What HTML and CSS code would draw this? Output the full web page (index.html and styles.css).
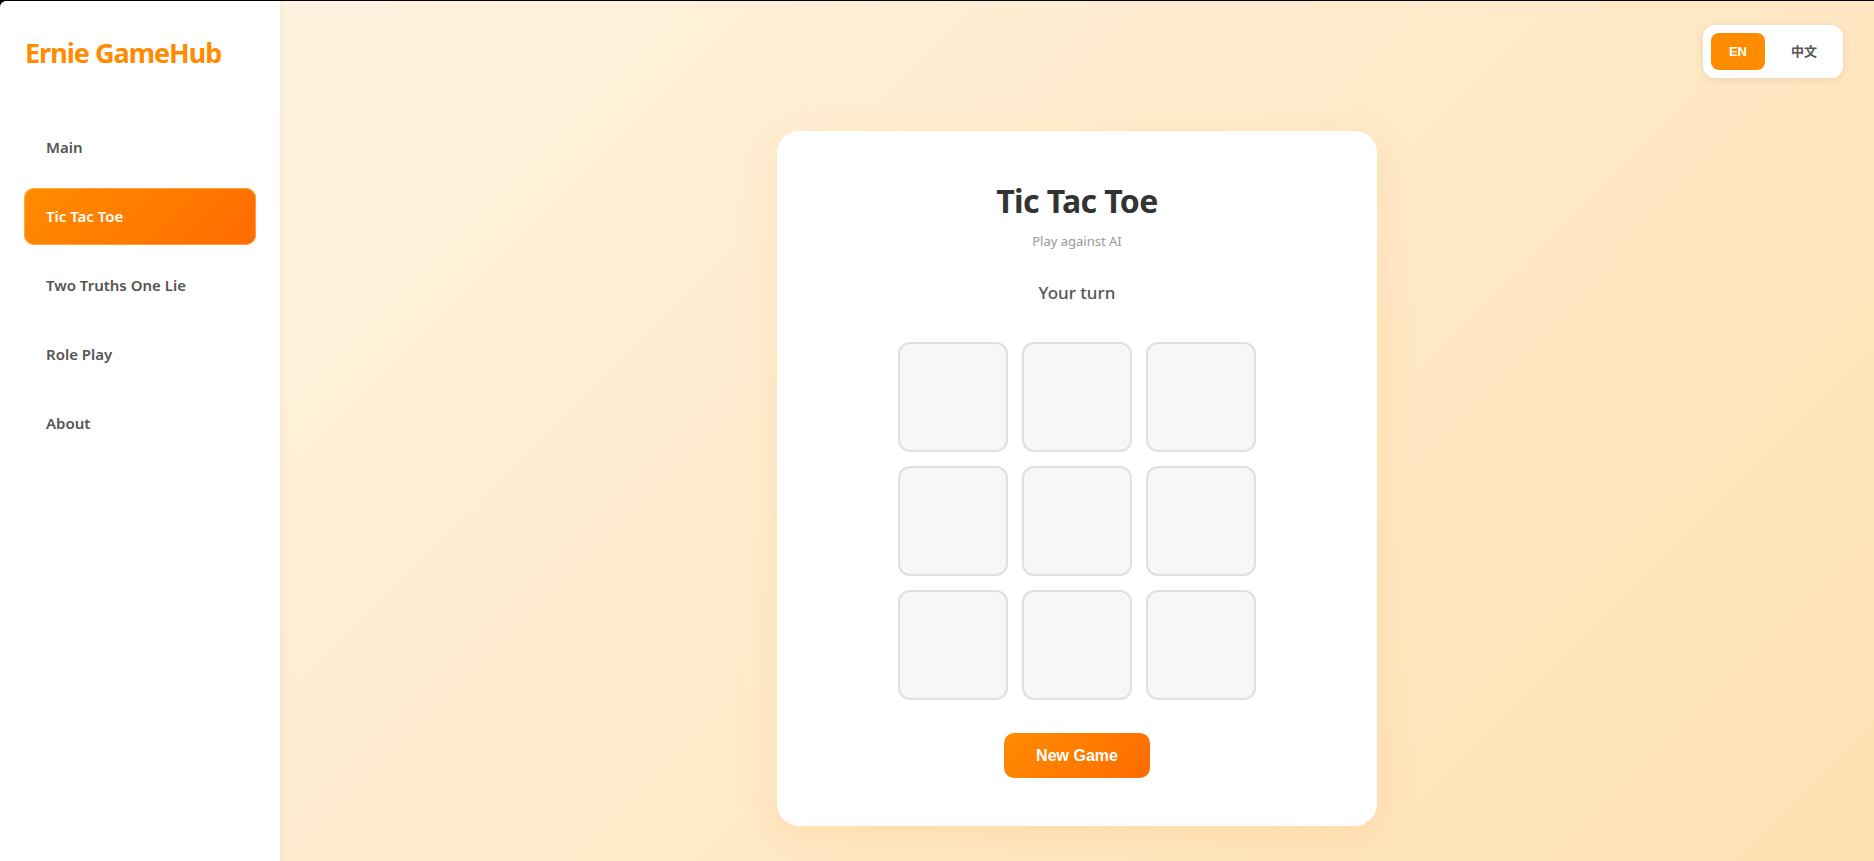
FILE: index.html
```html
<!DOCTYPE html>
<html lang="en">
<head>
    <meta charset="utf-8" />
    <meta name="viewport" content="width=device-width, initial-scale=1" />
    <title>Ernie GameHub - Tic Tac Toe</title>
    <link rel="stylesheet" href="styles.css">
</head>
<body>
    <div class="app">
        <aside class="sidebar">
            <div class="logo">Ernie GameHub</div>
            <nav class="nav">
                <a href="#" class="nav-item">Main</a>
                <a href="#" class="nav-item active">Tic Tac Toe</a>
                <a href="#" class="nav-item">Two Truths One Lie</a>
                <a href="#" class="nav-item">Role Play</a>
                <a href="#" class="nav-item">About</a>
            </nav>
        </aside>

        <main class="content">
            <div class="lang-switch">
                <button class="lang-btn active">EN</button>
                <button class="lang-btn">中文</button>
            </div>

            <section class="game-card">
                <h1 class="game-title">Tic Tac Toe</h1>
                <p class="game-subtitle">Play against AI</p>
                <div class="game-status">Your turn</div>

                <div class="board">
                    <div class="cell"></div>
                    <div class="cell"></div>
                    <div class="cell"></div>
                    <div class="cell"></div>
                    <div class="cell"></div>
                    <div class="cell"></div>
                    <div class="cell"></div>
                    <div class="cell"></div>
                    <div class="cell"></div>
                </div>

                <button class="new-game-btn">New Game</button>
            </section>
        </main>
    </div>
</body>
</html>
```

FILE: styles.css
```css
html,
body {
    margin: 0;
    padding: 0;
    height: 100%;
}

body {
    font-family: 'Noto Sans', 'Open Sans', sans-serif;
    background-color: #000;
    padding-top: 1px;
    box-sizing: border-box;
    color: #333;
}

.app {
    display: flex;
    height: 100%;
    border-top-left-radius: 6px;
    overflow: hidden;
}

.sidebar {
    width: 280px;
    flex-shrink: 0;
    background-color: #fff;
    padding: 34px 24px 32px;
    box-sizing: border-box;
    box-shadow: 2px 0 10px rgba(0, 0, 0, 0.04);
    position: relative;
    z-index: 1;
}

.logo {
    font-size: 27px;
    line-height: 36px;
    font-weight: 700;
    color: #ff8c00;
    margin-bottom: 48px;
    padding-left: 1px;
    letter-spacing: -1px;
}

.nav {
    display: flex;
    flex-direction: column;
    gap: 12px;
}

.nav-item {
    display: block;
    padding: 18px 22px;
    line-height: 21px;
    font-size: 15px;
    font-weight: 600;
    color: #555;
    text-decoration: none;
    border-radius: 10px;
}

.nav-item.active {
    background: linear-gradient(135deg, #ff8c00 0%, #ff6b00 100%);
    color: #fff;
    box-shadow: inset 0 0 0 1px rgba(255, 190, 110, 0.6);
}

.content {
    flex: 1;
    position: relative;
    display: flex;
    justify-content: center;
    align-items: flex-start;
    padding-top: 130px;
    background: linear-gradient(135deg, #fff3e0 0%, #ffe0b2 100%);
}

.lang-switch {
    position: absolute;
    top: 24px;
    right: 31px;
    display: flex;
    gap: 8px;
    padding: 8px;
    background-color: #fff;
    border-radius: 12px;
    box-shadow: 0 2px 10px rgba(0, 0, 0, 0.08);
}

.lang-btn {
    border: none;
    background: none;
    padding: 10px 18px;
    line-height: 17px;
    font-family: 'Liberation Sans', 'Noto Sans CJK SC', sans-serif;
    font-size: 13px;
    font-weight: 700;
    color: #555;
    border-radius: 8px;
    cursor: pointer;
}

.lang-btn.active {
    background-color: #ff8c00;
    color: #fff;
}

.game-card {
    width: 600px;
    background-color: #fff;
    border-radius: 22px;
    padding: 50px 0 48px;
    box-sizing: border-box;
    text-align: center;
    box-shadow: 0 10px 40px rgba(255, 140, 0, 0.12);
}

.game-title {
    margin: 0;
    font-size: 32px;
    line-height: 40px;
    font-weight: 700;
    letter-spacing: -0.6px;
    color: #333;
}

.game-subtitle {
    margin: 10px 0 0;
    font-size: 13px;
    line-height: 20px;
    color: #999;
}

.game-status {
    margin-top: 30px;
    font-size: 17px;
    line-height: 24px;
    font-weight: 500;
    color: #555;
}

.board {
    display: grid;
    grid-template-columns: repeat(3, 110px);
    grid-auto-rows: 110px;
    gap: 14px;
    justify-content: center;
    margin-top: 37px;
}

.cell {
    background-color: #f7f7f7;
    border: 2px solid #e0e0e0;
    border-radius: 12px;
    cursor: pointer;
}

.new-game-btn {
    margin-top: 33px;
    padding: 13px 32px;
    line-height: 19px;
    font-family: 'Liberation Sans', Arial, sans-serif;
    font-size: 16px;
    font-weight: 700;
    color: #fff;
    border: none;
    border-radius: 10px;
    background: linear-gradient(135deg, #ff8c00 0%, #ff6b00 100%);
    cursor: pointer;
}
```
